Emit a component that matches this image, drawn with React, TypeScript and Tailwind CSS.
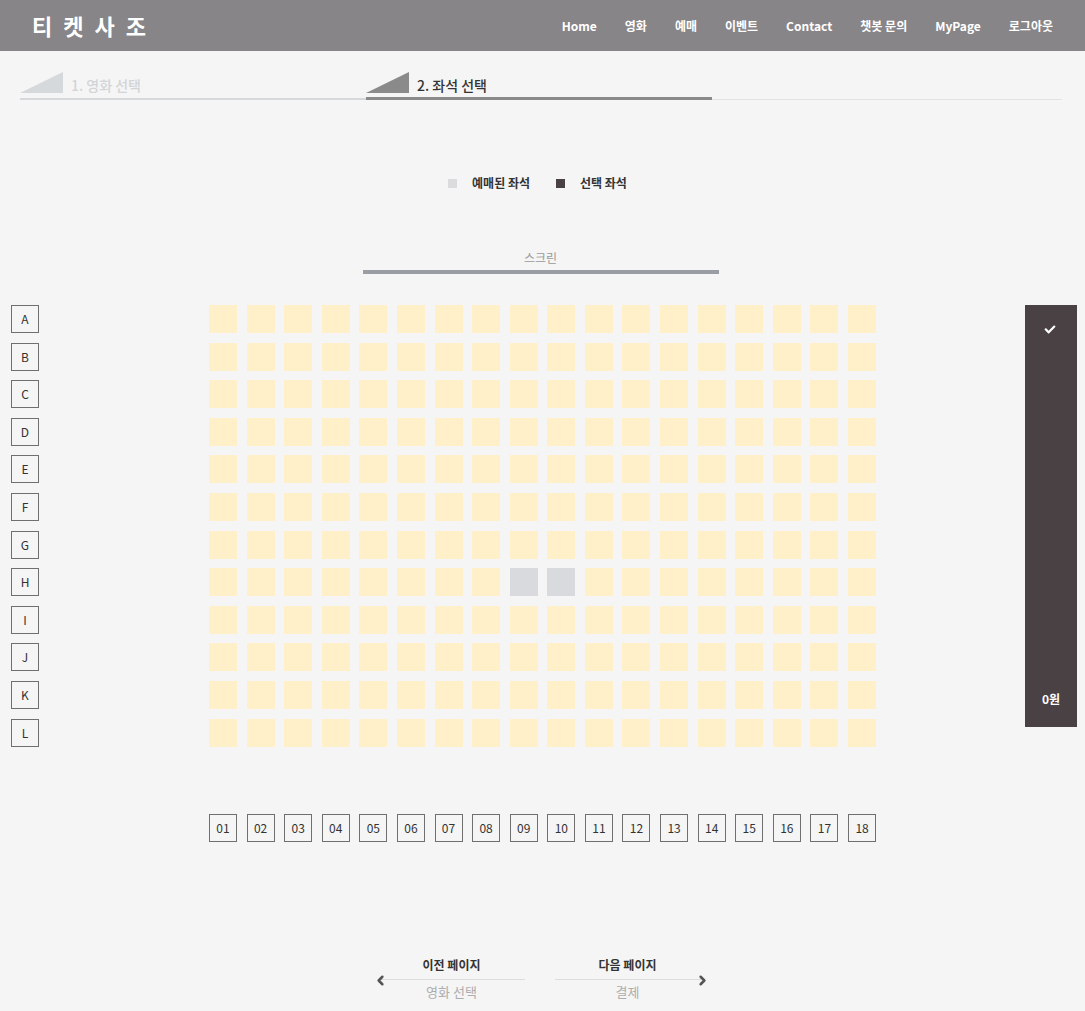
import React from 'react';
import { ChevronLeft, ChevronRight } from 'lucide-react';

const NAV_ITEMS = ['Home', '영화', '예매', '이벤트', 'Contact', '챗봇 문의', 'MyPage', '로그아웃'];
const ROWS = ['A', 'B', 'C', 'D', 'E', 'F', 'G', 'H', 'I', 'J', 'K', 'L'];
const COLS = Array.from({ length: 18 }, (_, i) => String(i + 1).padStart(2, '0'));
const SOLD = ['H09', 'H10'];

const Triangle = ({ color }: { color: string }) => (
  <svg width="43" height="21" viewBox="0 0 43 21" className="shrink-0">
    <polygon points="0,21 43,0 43,21" fill={color} />
  </svg>
);

type StepProps = {
  label: string;
  active?: boolean;
};

const Step = ({ label, active }: StepProps) => (
  <div className="flex w-[346px] flex-col">
    <div className="flex items-end gap-2">
      <Triangle color={active ? '#8a8a8a' : '#d6d9dc'} />
      <span
        className={
          active
            ? 'text-[14px] font-medium leading-[16px] text-[#333]'
            : 'text-[14px] font-medium leading-[16px] text-[#d2d4d7]'
        }
      >
        {label}
      </span>
    </div>
    <div className={active ? 'mt-1 h-[3px] bg-[#8a8a8a]' : 'mt-[5px] h-[2px] bg-[#d6d9dc]'} />
  </div>
);

const LabelBox = ({ children }: { children: React.ReactNode }) => (
  <div className="flex h-[28px] w-[28px] items-center justify-center border border-[#6f6f6f] text-[12px] text-[#333]">
    {children}
  </div>
);

const PageLink = ({ title, sub, dir }: { title: string; sub: string; dir: 'prev' | 'next' }) => (
  <div className="relative flex w-[146px] flex-col items-center">
    <span className="text-[12px] font-bold leading-[18px] text-[#333]">{title}</span>
    <div className="mt-[5px] h-px w-full bg-[#dcdcdc]" />
    <span className="mt-[2px] text-[13px] leading-[20px] text-[#adadad]">{sub}</span>
    {dir === 'prev' ? (
      <ChevronLeft size={15} strokeWidth={4} className="absolute left-[-6px] top-[17px] text-[#555]" />
    ) : (
      <ChevronRight size={15} strokeWidth={4} className="absolute right-[-9px] top-[17px] text-[#555]" />
    )}
  </div>
);

const App = () => {
  return (
    <div className="min-h-screen bg-[#f5f5f5] font-['Noto_Sans_CJK_KR','Noto_Sans',sans-serif]">
      <header className="flex h-[51px] items-center justify-between bg-[#878588] pl-8 pr-8">
        <h1 className="text-[22px] font-bold tracking-[3px] text-white">티 켓 사 조</h1>
        <nav className="flex items-center gap-[28px]">
          {NAV_ITEMS.map((item) => (
            <span key={item} className="text-[12px] font-bold text-white">
              {item}
            </span>
          ))}
        </nav>
      </header>

      <main className="pt-[21px]">
        <div className="flex items-end px-[20px]">
          <Step label="1. 영화 선택" />
          <Step label="2. 좌석 선택" active />
          <div className="h-px w-[350px] bg-[#e3e3e3]" />
        </div>

        <div className="mt-[74px] flex items-center justify-center gap-[14px] pr-[10px] text-[12px] font-bold leading-[18px] text-[#333]">
          <div className="flex items-center gap-[15px]">
            <div className="h-[9px] w-[9px] bg-[#d9dbdd]" />
            <span>예매된 좌석</span>
          </div>
          <div className="ml-[12px] flex items-center gap-[15px]">
            <div className="h-[9px] w-[9px] bg-[#4a4145]" />
            <span>선택 좌석</span>
          </div>
        </div>

        <div className="mt-[57px] flex flex-col items-center pr-[4px]">
          <span className="text-[12px] leading-[18px] text-[#999]">스크린</span>
          <div className="mt-[3px] h-[4px] w-[356px] bg-[#9a9ea3]" />
        </div>

        <div className="mt-[31px] grid grid-cols-[1fr_auto_1fr]">
          <div className="flex flex-col gap-[9.6px] pl-[11px]">
            {ROWS.map((r) => (
              <LabelBox key={r}>{r}</LabelBox>
            ))}
          </div>
          <div className="grid grid-cols-[repeat(18,28px)] gap-[9.6px]">
            {ROWS.map((r) =>
              COLS.map((c) => (
                <div
                  key={r + c}
                  className={SOLD.includes(r + c) ? 'h-[28px] w-[28px] bg-[#d8dadd]' : 'h-[28px] w-[28px] bg-[#fff0c9]'}
                />
              ))
            )}
          </div>
          <div className="flex justify-end pr-[8px]">
            <div className="flex h-[422px] w-[52px] flex-col items-center justify-between bg-[#4a4145] pb-[19px] pt-[19px]">
              <svg width="12" height="11" viewBox="0 0 512 512" fill="white" className="-ml-[2px]">
                <path d="M173.9 439.4l-166.4-166.4c-10-10-10-26.2 0-36.2l36.2-36.2c10-10 26.2-10 36.2 0L192 312.7 432.1 72.6c10-10 26.2-10 36.2 0l36.2 36.2c10 10 10 26.2 0 36.2l-294.4 294.4c-10 10-26.2 10-36.2 0z" />
              </svg>
              <span className="text-[12px] font-bold text-white">0원</span>
            </div>
          </div>
        </div>

        <div className="mt-[67px] grid grid-cols-[1fr_auto_1fr]">
          <div />
          <div className="grid grid-cols-[repeat(18,28px)] gap-[9.6px]">
            {COLS.map((c) => (
              <LabelBox key={c}>{c}</LabelBox>
            ))}
          </div>
          <div />
        </div>

        <div className="mt-[114px] flex justify-center gap-[30px] pb-4 pr-[6px]">
          <PageLink title="이전 페이지" sub="영화 선택" dir="prev" />
          <PageLink title="다음 페이지" sub="결제" dir="next" />
        </div>
      </main>
    </div>
  );
};

export default App;
